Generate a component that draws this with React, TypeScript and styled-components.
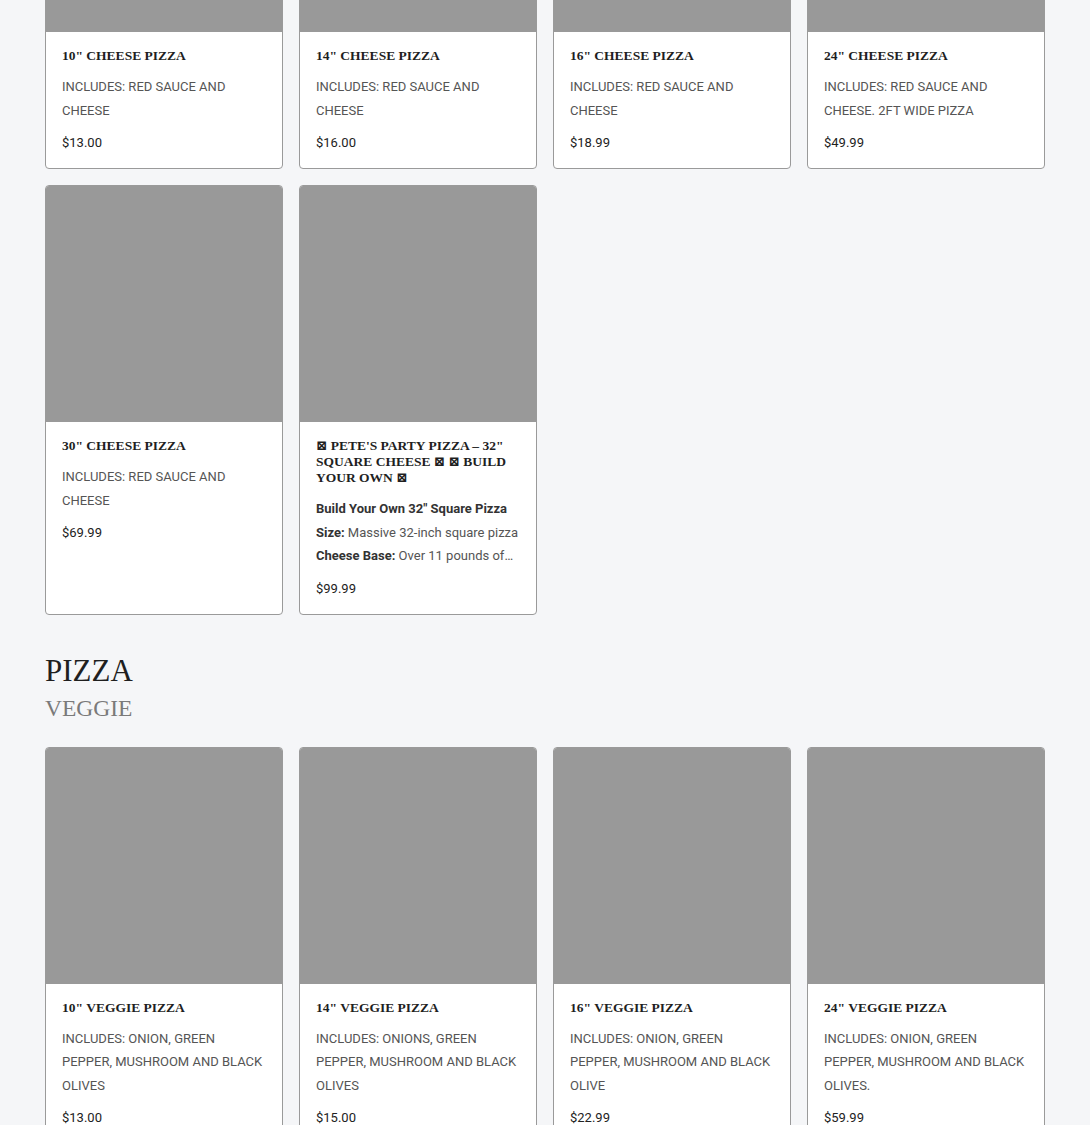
import React from "react";
import styled, { createGlobalStyle } from "styled-components";

const Global = createGlobalStyle`
  html, body { margin: 0; padding: 0; background: #f5f6f8; }
  body { font-family: "Roboto", "Noto Sans", sans-serif; color: #222; }
  * { box-sizing: border-box; }
`;

const Page = styled.div`
  width: 1000px;
  margin: -205px auto 0;
  padding-bottom: 40px;
`;

const Section = styled.section`
  display: flex;
  flex-direction: column;
  margin-bottom: 37px;
`;

const Heading = styled.div`
  margin-bottom: 21px;
`;

const H2 = styled.h2`
  margin: 0;
  font-family: "Liberation Serif", "DejaVu Serif", serif;
  font-weight: 400;
  font-size: 31px;
  line-height: 38px;
  color: #1f1f1f;
`;

const H3 = styled.h3`
  margin: 0;
  font-family: "Liberation Serif", "DejaVu Serif", serif;
  font-weight: 400;
  font-size: 23.5px;
  line-height: 36px;
  color: #7a7a7a;
`;

const Grid = styled.div`
  display: grid;
  grid-template-columns: repeat(4, 238px);
  column-gap: 16px;
  row-gap: 16px;
`;

const Card = styled.div`
  background: #fff;
  border: 1px solid #9a9a9a;
  border-radius: 4px;
  overflow: hidden;
  display: flex;
  flex-direction: column;
`;

const Thumb = styled.div`
  height: 236px;
  background: #999;
`;

const Body = styled.div`
  padding: 16px 16px 14px;
`;

const Title = styled.h4`
  margin: 0 0 11px;
  font-family: "Liberation Serif", "DejaVu Serif", serif;
  font-weight: 700;
  font-size: 13.5px;
  line-height: 16px;
  text-transform: uppercase;
  color: #1f1f1f;
`;

const Desc = styled.div`
  font-size: 13px;
  line-height: 23.5px;
  color: #555;
  margin-bottom: 10px;
  strong { color: #333; font-weight: 700; }
`;

const Line = styled.div`
  white-space: nowrap;
  overflow: hidden;
  text-overflow: ellipsis;
`;

const Price = styled.div`
  font-size: 13px;
  line-height: 22px;
  color: #222;
`;

type Item = { title: string; desc: React.ReactNode; price: string };

const cheese: Item[] = [
  { title: '10" Cheese Pizza', desc: "INCLUDES: RED SAUCE AND CHEESE", price: "$13.00" },
  { title: '14" Cheese Pizza', desc: "INCLUDES: RED SAUCE AND CHEESE", price: "$16.00" },
  { title: '16" Cheese Pizza', desc: "INCLUDES: RED SAUCE AND CHEESE", price: "$18.99" },
  { title: '24" Cheese Pizza', desc: "INCLUDES: RED SAUCE AND CHEESE. 2FT WIDE PIZZA", price: "$49.99" },
  { title: '30" Cheese Pizza', desc: "INCLUDES: RED SAUCE AND CHEESE", price: "$69.99" },
  {
    title: '⊠ Pete\'s Party Pizza – 32" Square Cheese ⊠ ⊠ Build Your Own ⊠',
    desc: (
      <>
        <Line>
          <strong>Build Your Own 32" Square Pizza</strong>
        </Line>
        <Line>
          <strong>Size:</strong> Massive 32-inch square pizza
        </Line>
        <Line>
          <strong>Cheese Base:</strong> Over 11 pounds of…
        </Line>
      </>
    ),
    price: "$99.99",
  },
];

const veggie: Item[] = [
  { title: '10" Veggie Pizza', desc: "INCLUDES: ONION, GREEN PEPPER, MUSHROOM AND BLACK OLIVES", price: "$13.00" },
  { title: '14" Veggie Pizza', desc: "INCLUDES: ONIONS, GREEN PEPPER, MUSHROOM AND BLACK OLIVES", price: "$15.00" },
  { title: '16" Veggie Pizza', desc: "INCLUDES: ONION, GREEN PEPPER, MUSHROOM AND BLACK OLIVE", price: "$22.99" },
  { title: '24" Veggie Pizza', desc: "INCLUDES: ONION, GREEN PEPPER, MUSHROOM AND BLACK OLIVES.", price: "$59.99" },
];

function ProductCard({ item }: { item: Item }) {
  return (
    <Card>
      <Thumb />
      <Body>
        <Title>{item.title}</Title>
        <Desc>{item.desc}</Desc>
        <Price>{item.price}</Price>
      </Body>
    </Card>
  );
}

export default function App() {
  return (
    <>
      <Global />
      <Page>
        <Section>
          <Grid>
            {cheese.map((it) => (
              <ProductCard key={it.title} item={it} />
            ))}
          </Grid>
        </Section>
        <Section>
          <Heading>
            <H2>PIZZA</H2>
            <H3>VEGGIE</H3>
          </Heading>
          <Grid>
            {veggie.map((it) => (
              <ProductCard key={it.title} item={it} />
            ))}
          </Grid>
        </Section>
      </Page>
    </>
  );
}
